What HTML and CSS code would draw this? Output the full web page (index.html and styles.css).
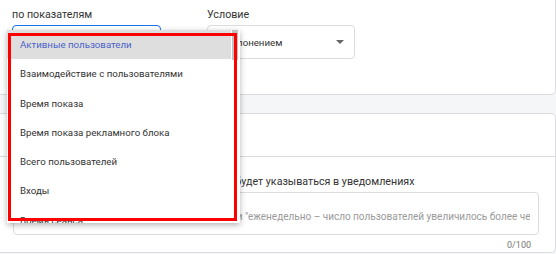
FILE: index.html
```html
<!DOCTYPE html>
<html lang="ru">
<head>
  <meta charset="UTF-8">
  <meta name="viewport" content="width=device-width, initial-scale=1.0">
  <title>Оповещение</title>
  <link rel="stylesheet" href="styles.css">
</head>
<body>
  <div class="page">
    <section class="card card-top">
      <div class="fields">
        <div class="field field-metric">
          <label class="field-label">по показателям</label>
          <div class="select select-focus">Активные пользователи</div>
        </div>
        <div class="field field-cond">
          <label class="field-label">Условие</label>
          <div class="select">
            <span>С отклонением</span>
            <span class="caret"></span>
          </div>
        </div>
      </div>
    </section>

    <section class="card card-bottom">
      <div class="row-empty"></div>
      <div class="name-block">
        <label class="field-label">Дайте название оповещения. Это название будет указываться в уведомлениях</label>
        <div class="textarea">
          <div class="placeholder">Например, "ежедневно – сеансов &lt; 100 000" и "еженедельно – число пользователей увеличилось более чем на 10%"</div>
        </div>
        <div class="counter">0/100</div>
      </div>
    </section>

    <!-- open dropdown of the metric select -->
    <div class="menu">
      <ul class="menu-list">
        <li class="menu-item active">Активные пользователи</li>
        <li class="menu-item">Взаимодействие с пользователями</li>
        <li class="menu-item">Время показа</li>
        <li class="menu-item">Время показа рекламного блока</li>
        <li class="menu-item">Всего пользователей</li>
        <li class="menu-item">Входы</li>
        <li class="menu-item">Время сеанса</li>
      </ul>
      <div class="scroll"><div class="thumb"></div></div>
    </div>
    <div class="mark"></div>
  </div>
</body>
</html>
```

FILE: styles.css
```css
body {
  margin: 0;
  background: #f5f6f8;
  font-family: Roboto, "Liberation Sans", sans-serif;
  color: #333;
  overflow: hidden;
}

.page {
  position: relative;
  display: flow-root;
  width: 556px;
  height: 254px;
}

.card {
  background: #fff;
  border: 1px solid #dadce0;
  border-radius: 5px;
  margin-left: -10px;
  width: 566px;
  box-sizing: border-box;
}

.card-top {
  margin-top: -10px;
  height: 105px;
  padding: 17px 0 0 21px;
}

.fields {
  display: flex;
  gap: 46px;
}

.field-label {
  display: block;
  font-size: 10.7px;
  line-height: 14px;
  margin-bottom: 3px;
  white-space: nowrap;
}

.field-metric { width: 149px; }
.field-cond { width: 148px; }

.select {
  height: 34px;
  box-sizing: border-box;
  border: 1px solid #dadce0;
  border-radius: 4px;
  padding: 0 10px 0 5px;
  display: flex;
  align-items: center;
  justify-content: space-between;
  font-size: 9.7px;
  white-space: nowrap;
}

.select-focus {
  border-color: #1a73e8;
}

.caret {
  width: 0;
  height: 0;
  border-left: 4px solid transparent;
  border-right: 4px solid transparent;
  border-top: 4px solid #666;
}

.card-bottom {
  margin-top: 18px;
  padding-bottom: 1px;
}

.row-empty {
  height: 42px;
  border-bottom: 1px solid #dadce0;
}

.name-block {
  padding: 18px 0 0 22px;
  width: 526px;
}

.textarea {
  height: 43px;
  box-sizing: border-box;
  border: 1px solid #dadce0;
  border-radius: 4px;
  padding: 17px 8px 0 13px;
}

.placeholder {
  font-size: 10px;
  line-height: 14px;
  color: #9a9a9a;
  white-space: nowrap;
  overflow: hidden;
}

.counter {
  margin-top: 4px;
  font-size: 9px;
  line-height: 12px;
  color: #777;
  text-align: right;
  padding-right: 8px;
}

.menu {
  position: absolute;
  left: 7px;
  top: 30px;
  width: 233px;
  height: 193px;
  background: #fff;
  box-shadow: 0 2px 6px rgba(0,0,0,0.3);
  display: flex;
  overflow: hidden;
}

.menu-list {
  list-style: none;
  margin: 0;
  padding: 0;
  flex: 1;
}

.menu-item {
  padding-left: 13px;
  height: 29.3px;
  line-height: 29.3px;
  font-size: 9.7px;
  white-space: nowrap;
}

.menu-item.active {
  background: #dedede;
  color: #4a63c8;
}

.scroll {
  width: 6px;
  margin: 0 2px 0 1px;
}

.thumb {
  height: 30px;
  background: #c1c1c1;
}

.mark {
  position: absolute;
  left: 8px;
  top: 33px;
  width: 229px;
  height: 188px;
  box-sizing: border-box;
  border: 3px solid #ff0000;
}
```
